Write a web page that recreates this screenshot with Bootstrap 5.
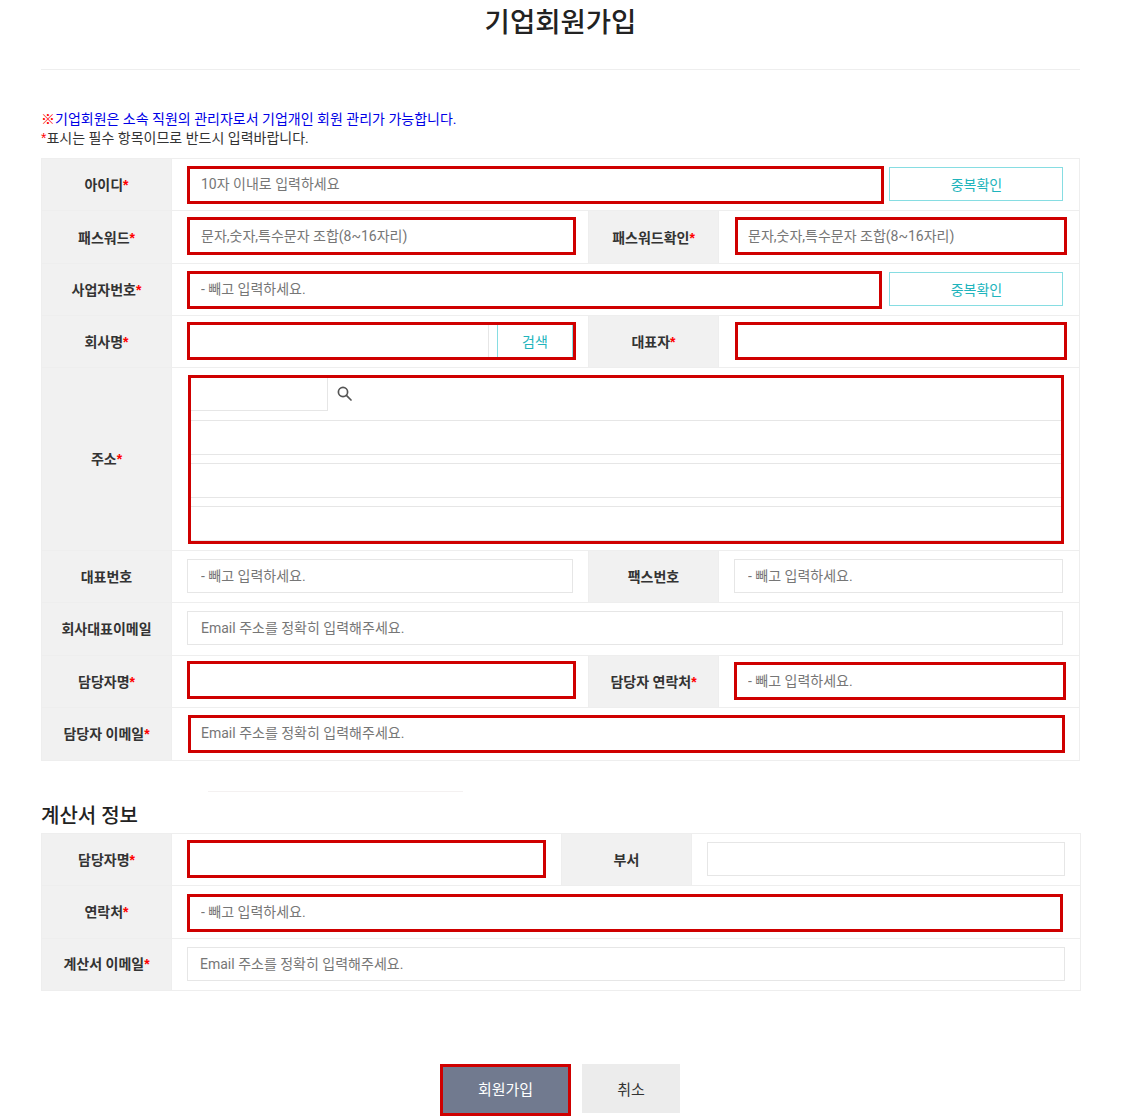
<!DOCTYPE html>
<html lang="ko">
<head>
    <meta charset="UTF-8">
    <meta name="viewport" content="width=device-width, initial-scale=1.0">
    <title>기업회원가입</title>
    <link href="https://cdn.jsdelivr.net/npm/bootstrap@5.3.3/dist/css/bootstrap.min.css" rel="stylesheet">
    <script src="https://cdn.jsdelivr.net/npm/bootstrap@5.3.3/dist/js/bootstrap.bundle.min.js"></script>
    <style>
        html, body {height: 100%; overflow: hidden;}
        body {font-family: Roboto, "Noto Sans CJK KR", sans-serif; color: #333; background: #fff;}
        .page-wrap {margin: 0 41px; width: 1039px;}
        .page-title {font-size: 27.5px; font-weight: 500; line-height: 46px; height: 42px; margin: 0 0 27px; text-align: center; color: #222;}
        .title-rule {height: 1px; background: #eeeeee; margin-bottom: 40px;}
        .notes {font-size: 14px; line-height: 19px; margin-bottom: 10px; color: #333;}
        .note-blue {color: #0000e6;}
        .req {color: #ff0000; font-family: "Liberation Sans", sans-serif;}

        .form-tbl {table-layout: fixed; border-collapse: collapse; width: 1039px; border: 1px solid #eeeeee;}
        .form-tbl.tbl-wide {width: 1040px;}
        .form-tbl td, .form-tbl th {border: 1px solid #eeeeee; padding: 0 15px; vertical-align: middle;}
        .form-tbl td:last-child {padding-right: 16px;}
        .tbl-wide td:last-child {padding-right: 15px;}
        .form-tbl th {background: #f1f1f1; font-size: 14px; font-weight: 700; text-align: center; color: #333; padding: 2px 0 0;}
        .form-tbl th.lbl-flat {padding-top: 0;}
        .h-52 {height: 52px;}
        .h-53 {height: 53px;}
        .h-183 {height: 183px;}

        .fld {display: block; height: 34px; border: 1px solid #e6e6e6; border-radius: 0; padding: 0 13px; font-size: 14px; color: #333; background: #fff; width: 100%; outline: 0;}
        .fld::placeholder {color: #767676; opacity: 1;}
        .fld-red {height: 38px; border: 3px solid #cf0000; padding: 0 11px;}
        .nudge-up {margin-top: -2px;}
        .nudge-up-2 {margin-top: -4px;}
        .nudge-down {margin-top: 2px;}
        .txt-up {padding-bottom: 2px;}
        .w-877 {width: 877px; margin-left: 1px; padding-left: 10px;}
        .w-695 {width: 695px;}
        .w-697 {width: 697px;}
        .w-389 {width: 389px;}
        .w-359 {width: 359px;}
        .w-332 {width: 332px; margin-left: 1px; padding-left: 10px;}
        .w-332-flush {width: 332px; padding-left: 11px;}
        .w-876 {width: 876px; padding-left: 11px;}
        .tbl-wide .fld:not(.fld-red) {padding-left: 12px;}

        .dup-row {display: flex; justify-content: space-between; align-items: flex-start;}
        .btn-dup {width: 174px; height: 34px; margin-top: 1px; border: 1px solid #86dde2; border-radius: 0; background: #fff; color: #20b4bc; font-size: 14px; padding: 3px 0 0 1px; flex: none;}
        .btn-dup:hover {background: #fff; color: #20b4bc; border-color: #86dde2;}

        .red-box {position: relative; overflow: hidden;}
        .red-box::after {content: ""; position: absolute; inset: 0; border: 3px solid #cf0000; pointer-events: none;}
        .company-box {height: 38px; padding: 2px 3px 0 2px; gap: 8px;}
        .company-box .fld {flex: 1; border-width: 0 1px 0 0; height: 36px;}
        .company-box .btn-dup {width: 76px; height: 36px; margin-top: 0; padding: 2px 0 0; flex: none;}

        .addr-box {width: 876px; height: 169px; margin-left: 1px; padding: 3px 2px;}
        .addr-search {height: 33px;}
        .addr-search .fld {width: 138px; border-width: 0 1px 1px 1px;}
        .addr-search svg {margin: -2px 0 0 9px; flex: none;}
        .addr-box > .fld {height: 35px; margin-top: 9px; padding: 0;}
        .addr-box > .fld-last {height: 35px; margin-top: 8px;}

        .faint-rule {width: 255px; height: 1px; margin: 30px 0 0 167px; background: #f4f1f1;}
        .sub-title {font-size: 20px; font-weight: 500; line-height: 30px; margin: 9px 0 2px; color: #222;}

        .foot-btns {display: flex; justify-content: center; align-items: flex-start; gap: 11px; margin-top: 73px; padding-right: 1px;}
        .btn-join, .btn-cancel {border-radius: 0; font-size: 15px; padding: 0;}
        .btn-join {width: 131px; height: 52px; background: #717a8f; color: #fff; border: 3px solid #cf0000;}
        .btn-join:hover {background: #717a8f; color: #fff; border-color: #cf0000;}
        .btn-cancel {width: 98px; height: 49px; padding-top: 4px; background: #ececec; color: #333; border: 0;}
        .btn-cancel:hover {background: #ececec; color: #333;}
    </style>
</head>
<body>
<div class="page-wrap">
    <h1 class="page-title">기업회원가입</h1>
    <div class="title-rule"></div>

    <div class="notes">
        <div><span class="req">※</span><span class="note-blue">기업회원은 소속 직원의 관리자로서 기업개인 회원 관리가 가능합니다.</span></div>
        <div><span class="req">*</span>표시는 필수 항목이므로 반드시 입력바랍니다.</div>
    </div>

    <form>
        <table class="form-tbl">
            <colgroup><col style="width:130px"><col style="width:417px"><col style="width:130px"><col></colgroup>
            <tr class="h-52">
                <th>아이디<span class="req">*</span></th>
                <td colspan="3">
                    <div class="dup-row">
                        <input class="fld fld-red w-697 txt-up" type="text" placeholder="10자 이내로 입력하세요">
                        <button type="button" class="btn btn-dup">중복확인</button>
                    </div>
                </td>
            </tr>
            <tr class="h-53">
                <th>패스워드<span class="req">*</span></th>
                <td><input class="fld fld-red w-389 nudge-up" type="password" placeholder="문자,숫자,특수문자 조합(8~16자리)"></td>
                <th>패스워드확인<span class="req">*</span></th>
                <td><input class="fld fld-red w-332 nudge-up" type="password" placeholder="문자,숫자,특수문자 조합(8~16자리)"></td>
            </tr>
            <tr class="h-52">
                <th>사업자번호<span class="req">*</span></th>
                <td colspan="3">
                    <div class="dup-row">
                        <input class="fld fld-red w-695 txt-up" type="text" placeholder="- 빼고 입력하세요.">
                        <button type="button" class="btn btn-dup">중복확인</button>
                    </div>
                </td>
            </tr>
            <tr class="h-52">
                <th>회사명<span class="req">*</span></th>
                <td>
                    <div class="red-box company-box d-flex w-389 nudge-up">
                        <input class="fld" type="text">
                        <button type="button" class="btn btn-dup">검색</button>
                    </div>
                </td>
                <th>대표자<span class="req">*</span></th>
                <td><input class="fld fld-red w-332 nudge-up" type="text"></td>
            </tr>
            <tr class="h-183">
                <th class="lbl-flat">주소<span class="req">*</span></th>
                <td colspan="3">
                    <div class="red-box addr-box">
                        <div class="addr-search d-flex align-items-center">
                            <input class="fld" type="text">
                            <svg width="15" height="15" viewBox="0 0 15 15" fill="none" stroke="#555" stroke-width="1.7">
                                <circle cx="6" cy="6" r="4.6"/>
                                <path d="M9.4 9.4 14 14" stroke-linecap="round"/>
                            </svg>
                        </div>
                        <input class="fld" type="text">
                        <input class="fld fld-last" type="text">
                        <input class="fld fld-last" type="text">
                    </div>
                </td>
            </tr>
            <tr class="h-52">
                <th>대표번호</th>
                <td><input class="fld nudge-up" type="text" placeholder="- 빼고 입력하세요."></td>
                <th>팩스번호</th>
                <td><input class="fld nudge-up" type="text" placeholder="- 빼고 입력하세요."></td>
            </tr>
            <tr class="h-53">
                <th class="lbl-flat">회사대표이메일</th>
                <td colspan="3"><input class="fld nudge-up" type="text" placeholder="Email 주소를 정확히 입력해주세요."></td>
            </tr>
            <tr class="h-52">
                <th>담당자명<span class="req">*</span></th>
                <td><input class="fld fld-red w-389 nudge-up-2" type="text"></td>
                <th>담당자 연락처<span class="req">*</span></th>
                <td><input class="fld fld-red w-332-flush nudge-up" type="text" placeholder="- 빼고 입력하세요."></td>
            </tr>
            <tr class="h-53">
                <th class="lbl-flat">담당자 이메일<span class="req">*</span></th>
                <td colspan="3"><input class="fld fld-red w-877 txt-up" type="text" placeholder="Email 주소를 정확히 입력해주세요."></td>
            </tr>
        </table>

        <div class="faint-rule"></div>
        <h2 class="sub-title">계산서 정보</h2>

        <table class="form-tbl tbl-wide">
            <colgroup><col style="width:130px"><col style="width:390px"><col style="width:130px"><col></colgroup>
            <tr class="h-52">
                <th>담당자명<span class="req">*</span></th>
                <td><input class="fld fld-red w-359 nudge-up" type="text"></td>
                <th>부서</th>
                <td><input class="fld nudge-up" type="text"></td>
            </tr>
            <tr class="h-53">
                <th class="lbl-flat">연락처<span class="req">*</span></th>
                <td colspan="3"><input class="fld fld-red w-876 nudge-down txt-up" type="text" placeholder="- 빼고 입력하세요."></td>
            </tr>
            <tr class="h-52">
                <th class="lbl-flat">계산서 이메일<span class="req">*</span></th>
                <td colspan="3"><input class="fld nudge-up" type="text" placeholder="Email 주소를 정확히 입력해주세요."></td>
            </tr>
        </table>

        <div class="foot-btns">
            <button type="button" class="btn btn-join">회원가입</button>
            <button type="button" class="btn btn-cancel">취소</button>
        </div>
    </form>
</div>
</body>
</html>
